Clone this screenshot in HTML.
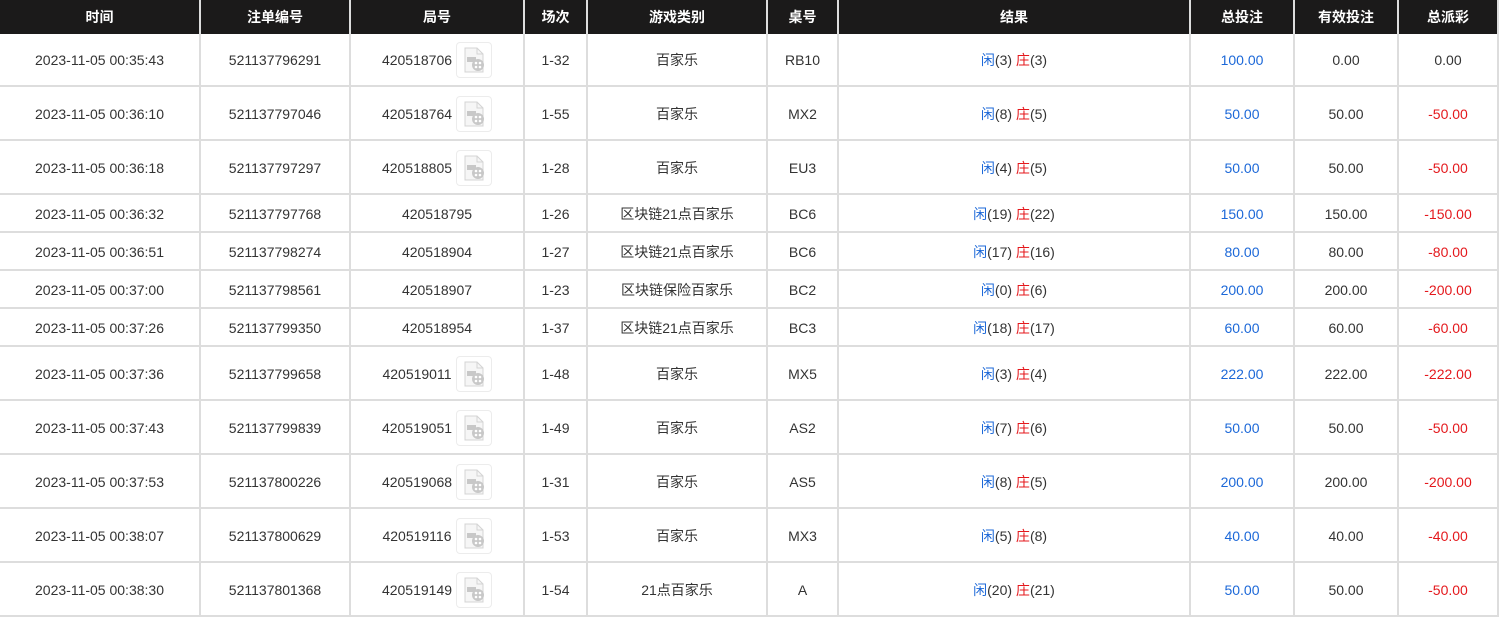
<!DOCTYPE html>
<html><head><meta charset="utf-8"><style>
body{margin:0;background:#fff;width:1506px;height:619px;overflow:hidden;font-family:"Liberation Sans","Noto Sans CJK SC",sans-serif;font-size:14px;color:#333}
.g{display:grid;grid-template-columns:201px 150px 174px 63px 180px 71px 352px 104px 104px 100px;grid-template-rows:34px 53px 54px 54px 38px 38px 38px 38px 54px 54px 54px 54px 54px;width:1499px}
.g>div{box-sizing:border-box;border-right:2px solid #ddd;border-bottom:2px solid #ddd;display:flex;align-items:center;justify-content:center;white-space:nowrap;padding-top:1px}
.g>.h{background:#1b1a1a;color:#fff;font-weight:bold;border-bottom:none;border-right-color:#ddd;padding-top:0}
.b{color:#1c68d8}.r{color:#e4181c}
.ic{width:34px;height:34px;border:1px solid #ececec;border-radius:4px;margin-left:4px;display:inline-flex;align-items:center;justify-content:center}
</style></head><body>
<div class="g" id="g">
<div class="h">时间</div><div class="h">注单编号</div><div class="h">局号</div><div class="h">场次</div><div class="h">游戏类别</div><div class="h">桌号</div><div class="h">结果</div><div class="h">总投注</div><div class="h">有效投注</div><div class="h">总派彩</div>
</div>
<script>
var I='<span class="ic"><svg width="26" height="28" viewBox="0 0 26 28"><path d="M4 2h12l6 6v18H4z" fill="#f6f6f6" stroke="#d4d4d4"/><path d="M16 2v6h6" fill="none" stroke="#d4d4d4"/><rect x="6" y="11" width="9" height="5" fill="#c8c8c8"/><circle cx="17" cy="19" r="6" fill="#c8c8c8"/><circle cx="15" cy="17" r="1.3" fill="#fff"/><circle cx="19" cy="17" r="1.3" fill="#fff"/><circle cx="15" cy="21" r="1.3" fill="#fff"/><circle cx="19" cy="21" r="1.3" fill="#fff"/></svg></span>';
var d=[
["00:35:43","521137796291","420518706",1,"1-32","百家乐","RB10",3,3,"100.00","0.00","0.00"],
["00:36:10","521137797046","420518764",1,"1-55","百家乐","MX2",8,5,"50.00","50.00","-50.00"],
["00:36:18","521137797297","420518805",1,"1-28","百家乐","EU3",4,5,"50.00","50.00","-50.00"],
["00:36:32","521137797768","420518795",0,"1-26","区块链21点百家乐","BC6",19,22,"150.00","150.00","-150.00"],
["00:36:51","521137798274","420518904",0,"1-27","区块链21点百家乐","BC6",17,16,"80.00","80.00","-80.00"],
["00:37:00","521137798561","420518907",0,"1-23","区块链保险百家乐","BC2",0,6,"200.00","200.00","-200.00"],
["00:37:26","521137799350","420518954",0,"1-37","区块链21点百家乐","BC3",18,17,"60.00","60.00","-60.00"],
["00:37:36","521137799658","420519011",1,"1-48","百家乐","MX5",3,4,"222.00","222.00","-222.00"],
["00:37:43","521137799839","420519051",1,"1-49","百家乐","AS2",7,6,"50.00","50.00","-50.00"],
["00:37:53","521137800226","420519068",1,"1-31","百家乐","AS5",8,5,"200.00","200.00","-200.00"],
["00:38:07","521137800629","420519116",1,"1-53","百家乐","MX3",5,8,"40.00","40.00","-40.00"],
["00:38:30","521137801368","420519149",1,"1-54","21点百家乐","A",20,21,"50.00","50.00","-50.00"]];
var h='';
d.forEach(function(r){
h+='<div>2023-11-05 '+r[0]+'</div><div>'+r[1]+'</div><div>'+r[2]+(r[3]?I:'')+'</div><div>'+r[4]+'</div><div>'+r[5]+'</div><div>'+r[6]+'</div><div><span class="b">闲</span>('+r[7]+') <span class="r">&nbsp;庄</span>('+r[8]+')</div><div class="b">'+r[9]+'</div><div>'+r[10]+'</div><div'+(r[11][0]=='-'?' class="r"':'')+'>'+r[11]+'</div>';
});
document.getElementById('g').insertAdjacentHTML('beforeend',h);
</script>
</body></html>
